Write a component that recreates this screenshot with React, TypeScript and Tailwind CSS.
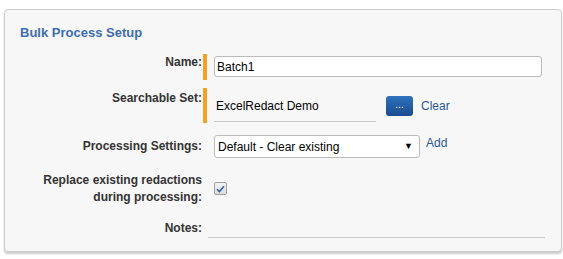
export default function App() {
  const font = { fontFamily: '"Liberation Sans", Arial, sans-serif' };
  return (
    <div className="min-h-[259px] w-[563px] bg-white pl-[4px] pt-[9px]" style={font}>
      <div className="h-[243px] w-[558px] rounded-[4px] border border-[#cccccc] bg-[#f7f7f7] shadow-[0_2px_2px_rgba(0,0,0,0.2)]">
        <h2 className="pl-[15px] pt-[15px] text-[13px] font-bold leading-[16px] text-[#3c6db0]">
          Bulk Process Setup
        </h2>

        <div className="mt-[13px] flex flex-col text-[12px] text-[#333]">
          {/* Name */}
          <div className="flex h-[26px] items-start">
            <label className="w-[198px] pr-[1px] pt-[1px] text-right font-bold leading-[14px]">Name:</label>
            <div className="h-[26px] w-[4px] bg-[#f4a024]" />
            <input
              defaultValue="Batch1"
              className="ml-[7px] mt-[2px] h-[21px] w-[328px] rounded-[3px] border border-[#bbbbbb] bg-white pl-[2px] text-[12px] text-black outline-none"
            />
          </div>

          {/* Searchable set */}
          <div className="mt-[8px] flex h-[35px] items-start">
            <label className="w-[198px] pr-[1px] pt-[3px] text-right font-bold leading-[14px]">Searchable Set:</label>
            <div className="h-[35px] w-[4px] bg-[#f4a024]" />
            <div className="ml-[7px] flex h-[34px] w-[162px] items-center border-b border-[#c8c8c8] pl-[2px] pt-[2px] text-[12px] text-black">
              ExcelRedact Demo
            </div>
            <button className="ml-[10px] mt-[8px] flex h-[20px] w-[27px] items-center justify-center rounded-[3px] bg-gradient-to-b from-[#2f72bd] to-[#1a4c8e] pb-[3px] text-[10px] leading-none text-white">
              ...
            </button>
            <a className="ml-[8px] mt-[11px] cursor-pointer leading-[14px] text-[#2a5699]">Clear</a>
          </div>

          {/* Processing settings */}
          <div className="mt-[12px] flex h-[23px] items-start">
            <label className="w-[198px] pr-[1px] pt-[4px] text-right font-bold leading-[14px]">Processing Settings:</label>
            <div className="w-[4px]" />
            <div className="relative ml-[7px] h-[23px] w-[206px]">
              <select
                defaultValue="default"
                className="h-[23px] w-full appearance-none rounded-[3px] border border-[#bbbbbb] bg-white pl-[3px] text-[12px] text-black outline-none"
              >
                <option value="default">Default - Clear existing</option>
              </select>
              <span className="pointer-events-none absolute right-[7px] top-[5px] text-[9px] leading-[12px] text-black">▼</span>
            </div>
            <a className="ml-[6px] mt-[1px] cursor-pointer leading-[14px] text-[#2a5699]">Add</a>
          </div>

          {/* Replace checkbox */}
          <div className="mt-[14px] flex items-start">
            <label className="w-[198px] pr-[1px] text-right font-bold leading-[17px]">
              Replace existing redactions
              <br />
              during processing:
            </label>
            <div className="w-[4px]" />
            <div className="ml-[7px] mt-[10px] flex h-[13px] w-[13px] items-center justify-center rounded-[2px] border border-[#a0a0a0] bg-gradient-to-b from-[#f4f4f4] to-[#dcdcdc]">
              <svg width="9" height="8" viewBox="0 0 9 8" fill="none">
                <path d="M1 4.2 L3.4 6.6 L8 1.2" stroke="#2f5f9e" strokeWidth="1.5" />
              </svg>
            </div>
          </div>

          {/* Notes */}
          <div className="mt-[15px] flex items-start">
            <label className="w-[198px] pr-[1px] text-right font-bold leading-[14px]">Notes:</label>
            <div className="w-[4px]" />
            <div className="ml-[1px] h-[17px] w-[337px] border-b border-[#c8c8c8]" />
          </div>
        </div>
      </div>
    </div>
  );
}
